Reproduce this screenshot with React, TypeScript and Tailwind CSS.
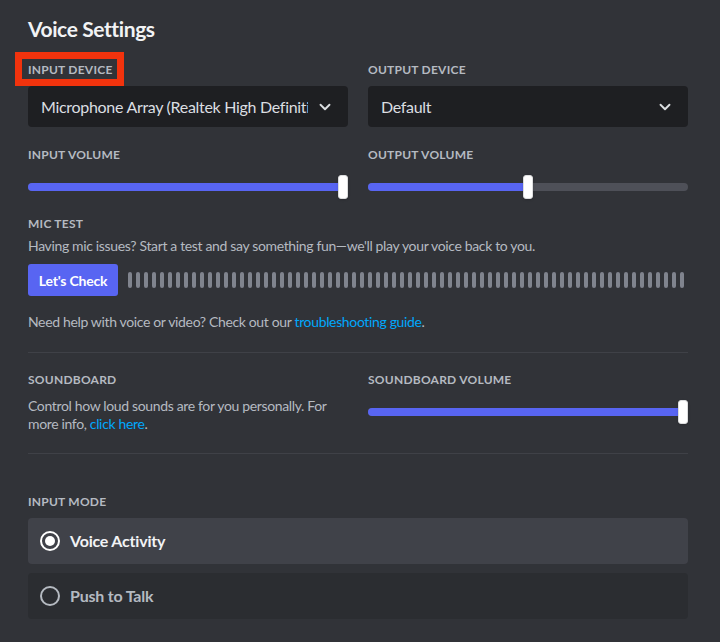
import { ChevronDown } from "lucide-react";

const font = { fontFamily: 'Lato, "Noto Sans", sans-serif' };

const Label = ({ children }: { children: React.ReactNode }) => (
  <div className="text-[12px] leading-4 font-bold uppercase tracking-[0.02em] text-[#b5bac1]">{children}</div>
);

const Select = ({ value }: { value: string }) => (
  <div className="mt-2 h-[41px] rounded bg-[#1e1f22] flex items-center pl-[13px] pr-[14px] gap-2">
    <span className="flex-1 overflow-hidden whitespace-nowrap text-[16px] tracking-[-0.3px] text-[#dbdee1]">{value}</span>
    <ChevronDown className="w-[18px] h-[18px] text-[#dbdee1] shrink-0" strokeWidth={2.5} />
  </div>
);

const Slider = ({ value }: { value: number }) => (
  <div className="relative mt-3 h-6 flex items-center">
    <div className="w-full h-2 rounded-full bg-[#4e5058]" />
    <div
      className="absolute left-0 h-2 rounded-full bg-[#5865f2]"
      style={{ width: `calc(${value * 100}% - ${value * 10}px + 5px)` }}
    />
    <div
      className="absolute top-0 w-[10px] h-6 rounded-[3px] bg-white border border-[#dcddde] shadow"
      style={{ left: `calc(${value * 100}% - ${value * 10}px)` }}
    />
  </div>
);

const Radio = ({ checked }: { checked: boolean }) => (
  <div
    className={`w-5 h-5 rounded-full border-2 flex items-center justify-center ${
      checked ? "border-white" : "border-[#b5bac1]"
    }`}
  >
    {checked && <div className="w-[10px] h-[10px] rounded-full bg-white" />}
  </div>
);

export default function App() {
  return (
    <div className="w-[720px] h-[642px] bg-[#313338] pt-[17px] overflow-hidden" style={font}>
      <div className="w-[660px] ml-7">
        <h1 className="text-[21px] leading-6 font-bold tracking-[-0.4px] text-[#f2f3f5]">Voice Settings</h1>

        <div className="grid grid-cols-2 gap-x-5 mt-[21px]">
          <div className="relative">
            <Label>Input Device</Label>
            {/* red highlight frame */}
            <div className="absolute -left-[13px] -top-[10px] w-[109px] h-[34px] border-[7px] border-[#f2330d] pointer-events-none" />
            <Select value="Microphone Array (Realtek High Definition Audio)" />
          </div>
          <div>
            <Label>Output Device</Label>
            <Select value="Default" />
          </div>

          <div className="mt-5">
            <Label>Input Volume</Label>
            <Slider value={1} />
          </div>
          <div className="mt-5">
            <Label>Output Volume</Label>
            <Slider value={0.5} />
          </div>
        </div>

        <div className="mt-[17px]">
          <Label>Mic Test</Label>
          <p className="mt-[4px] text-[14px] leading-5 tracking-[-0.35px] text-[#b5bac1]">
            Having mic issues? Start a test and say something fun—we'll play your voice back to you.
          </p>
          <div className="mt-[8px] flex items-center gap-[10px] pr-1">
            <button className="h-8 w-[90px] rounded-[3px] bg-[#5865f2] text-white text-[14px] font-bold tracking-[-0.2px]">
              Let's Check
            </button>
            <div className="flex-1 flex justify-between">
              {Array.from({ length: 70 }).map((_, i) => (
                <div key={i} className="w-1 h-4 rounded-full bg-[#80848e]" />
              ))}
            </div>
          </div>
          <p className="mt-4 text-[14px] leading-5 tracking-[-0.35px] text-[#b5bac1]">
            Need help with voice or video? Check out our{" "}
            <span className="text-[#00a8fc]">troubleshooting guide</span>.
          </p>
        </div>

        <div className="mt-5 border-t border-[#3f4147]" />

        <div className="grid grid-cols-2 gap-x-5 mt-[19px]">
          <div>
            <Label>Soundboard</Label>
            <p className="mt-[9px] text-[14px] leading-[18px] tracking-[-0.35px] text-[#b5bac1]">
              Control how loud sounds are for you personally. For more info,{" "}
              <span className="text-[#00a8fc]">click here</span>.
            </p>
          </div>
          <div>
            <Label>Soundboard Volume</Label>
            <Slider value={1} />
          </div>
        </div>

        <div className="mt-5 border-t border-[#3f4147]" />

        <div className="mt-10">
          <Label>Input Mode</Label>
          <div className="mt-[8px] flex flex-col gap-[9px]">
            <div className="h-[46px] rounded bg-[#404249] flex items-center gap-[10px] px-3">
              <Radio checked />
              <span className="text-[16px] font-bold tracking-[-0.2px] text-[#f2f3f5]">Voice Activity</span>
            </div>
            <div className="h-[46px] rounded bg-[#2b2d31] flex items-center gap-[10px] px-3">
              <Radio checked={false} />
              <span className="text-[16px] font-bold tracking-[-0.2px] text-[#b5bac1]">Push to Talk</span>
            </div>
          </div>
        </div>
      </div>
    </div>
  );
}
